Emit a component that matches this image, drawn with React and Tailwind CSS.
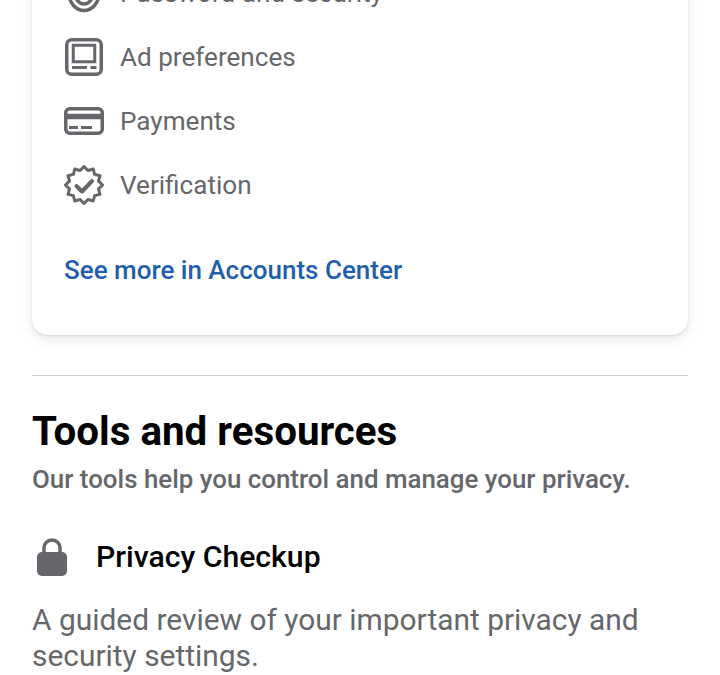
const Shield = () => (
  <svg width="40" height="40" viewBox="0 0 40 40" fill="none" stroke="#65676b" strokeWidth="3.5">
    <path d="M20 3 L35 8 V20 C35 30 28 37.5 20 37.5 C12 37.5 5 30 5 20 V8 Z" strokeLinejoin="round" />
    <path d="M20 10 L29 13 V20 C29 26 25 31 20 31 C15 31 11 26 11 20 V13 Z" strokeLinejoin="round" />
  </svg>
);

const AdIcon = () => (
  <svg width="40" height="40" viewBox="0 0 40 40" fill="none">
    <rect x="2.75" y="2.75" width="34.5" height="34.5" rx="5" stroke="#65676b" strokeWidth="3.5" />
    <rect x="9.25" y="8.25" width="21.5" height="16.5" stroke="#65676b" strokeWidth="3" />
    <path d="M8 30.5h15M26.5 30.5h6" stroke="#65676b" strokeWidth="3" />
  </svg>
);

const CardIcon = () => (
  <svg width="40" height="28" viewBox="0 0 40 28" fill="none">
    <rect x="1.75" y="1.75" width="36.5" height="24.5" rx="4" stroke="#65676b" strokeWidth="3.5" />
    <path d="M2 9.5h36" stroke="#65676b" strokeWidth="5.5" />
    <path d="M5 20.5h9M17 20.5h11" stroke="#65676b" strokeWidth="3" />
  </svg>
);

const BadgeIcon = () => (
  <svg width="40" height="40" viewBox="0 0 40 40" fill="none" stroke="#65676b" strokeWidth="3" strokeLinejoin="round" strokeLinecap="round">
    <path d="M20 1.5 L23.9 5.5 L29.25 4 L30.6 9.4 L36 10.75 L34.5 16.1 L38.5 20 L34.5 23.9 L36 29.25 L30.6 30.6 L29.25 36 L23.9 34.5 L20 38.5 L16.1 34.5 L10.75 36 L9.4 30.6 L4 29.25 L5.5 23.9 L1.5 20 L5.5 16.1 L4 10.75 L9.4 9.4 L10.75 4 L16.1 5.5 Z" />
    <path d="M12.5 21 L18 26.5 L28 16" strokeWidth="4" />
  </svg>
);

const LockIcon = () => (
  <svg width="30" height="38" viewBox="0 0 30 38">
    <path d="M7 16V10a8 8 0 0 1 16 0v6" fill="none" stroke="#65676b" strokeWidth="3.5" />
    <rect x="0" y="14" width="30" height="24" rx="5" fill="#65676b" />
  </svg>
);

const rows = [
  { label: 'Password and security', icon: <Shield /> },
  { label: 'Ad preferences', icon: <AdIcon /> },
  { label: 'Payments', icon: <CardIcon /> },
  { label: 'Verification', icon: <BadgeIcon /> },
];

export default function App() {
  return (
    <div className="h-[675px] overflow-hidden bg-white px-8 font-['Roboto',sans-serif]">
      <div className="-mt-[39px] flex h-[374px] flex-col rounded-b-2xl bg-white pl-8 shadow-[0_1px_2px_rgba(0,0,0,0.1),0_4px_12px_rgba(0,0,0,0.1)]">
        <div className="flex flex-col">
          {rows.map((row) => (
            <div key={row.label} className="flex h-16 items-center">
              <div className="flex w-10 justify-center">{row.icon}</div>
              <span className="ml-4 text-[26.1px] leading-8 text-[#65676b]">{row.label}</span>
            </div>
          ))}
        </div>
        <a className="mt-[37px] text-[26px] leading-8 font-medium text-[#1f5fad]">See more in Accounts Center</a>
      </div>

      <div className="mt-10 border-t border-[#cfd0d2] pt-[33px]">
        <h2 className="text-[40.3px] leading-[46px] font-bold text-black">Tools and resources</h2>
        <p className="mt-2 text-[25.9px] leading-8 font-medium text-[#65676b]">
          Our tools help you control and manage your privacy.
        </p>
        <div className="mt-[43px] flex h-[38px] items-center">
          <div className="flex w-10 justify-start pl-[5px]">
            <LockIcon />
          </div>
          <span className="ml-6 text-[30.2px] leading-9 font-medium text-black">Privacy Checkup</span>
        </div>
        <p className="mt-[26px] text-[29.9px] leading-9 text-[#65676b]">
          A guided review of your important privacy and security settings.
        </p>
      </div>
    </div>
  );
}
